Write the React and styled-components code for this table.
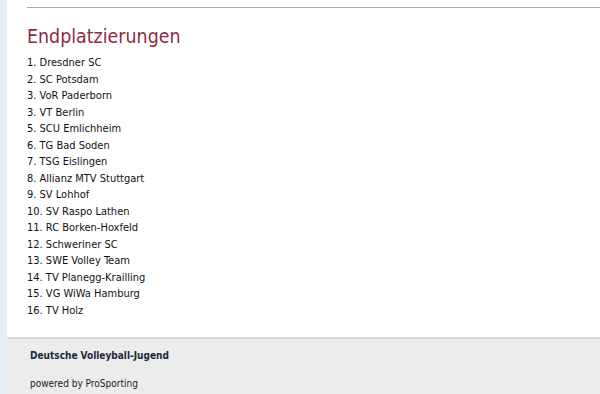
import React from "react";
import styled, { createGlobalStyle } from "styled-components";

const Global = createGlobalStyle`
  html, body { margin: 0; padding: 0; }
  body {
    background: #e4eef9;
    font-family: Tahoma, "DejaVu Sans Condensed", "DejaVu Sans", sans-serif;
    color: #111;
  }
`;

const Page = styled.div`
  margin-left: 7px;
  min-height: 394px;
  display: flex;
  flex-direction: column;
  background: #fff;
`;

const Main = styled.main`
  padding: 7px 0 0 20px;
  height: 337px;
  box-sizing: border-box;
`;

const Rule = styled.hr`
  margin: 0;
  border: 0;
  border-top: 1px solid #a9a9a9;
`;

const Heading = styled.h2`
  margin: 17px 0 6px;
  font-size: 19.4px;
  font-weight: normal;
  line-height: 24px;
  color: #8e2a40;
`;

const List = styled.ul`
  margin: 0;
  padding: 0;
  list-style: none;
`;

const Item = styled.li`
  font-size: 11px;
  line-height: 16.5px;
`;

const Footer = styled.footer`
  flex: 1;
  background: #ececec;
  border-top: 2px solid #d9d9d9;
  padding: 10px 0 0 23px;
`;

const Org = styled.div`
  font-size: 10px;
  font-weight: bold;
  color: #1b2838;
  line-height: 14px;
`;

const Powered = styled.div`
  margin-top: 14px;
  font-size: 10px;
  color: #222;
  line-height: 14px;
`;

const teams = [
  "1. Dresdner SC",
  "2. SC Potsdam",
  "3. VoR Paderborn",
  "3. VT Berlin",
  "5. SCU Emlichheim",
  "6. TG Bad Soden",
  "7. TSG Eislingen",
  "8. Allianz MTV Stuttgart",
  "9. SV Lohhof",
  "10. SV Raspo Lathen",
  "11. RC Borken-Hoxfeld",
  "12. Schweriner SC",
  "13. SWE Volley Team",
  "14. TV Planegg-Krailling",
  "15. VG WiWa Hamburg",
  "16. TV Holz",
];

export default function App() {
  return (
    <>
      <Global />
      <Page>
        <Main>
          <Rule />
          <Heading>Endplatzierungen</Heading>
          <List>
            {teams.map((t) => (
              <Item key={t}>{t}</Item>
            ))}
          </List>
        </Main>
        <Footer>
          <Org>Deutsche Volleyball-Jugend</Org>
          <Powered>powered by ProSporting</Powered>
        </Footer>
      </Page>
    </>
  );
}
